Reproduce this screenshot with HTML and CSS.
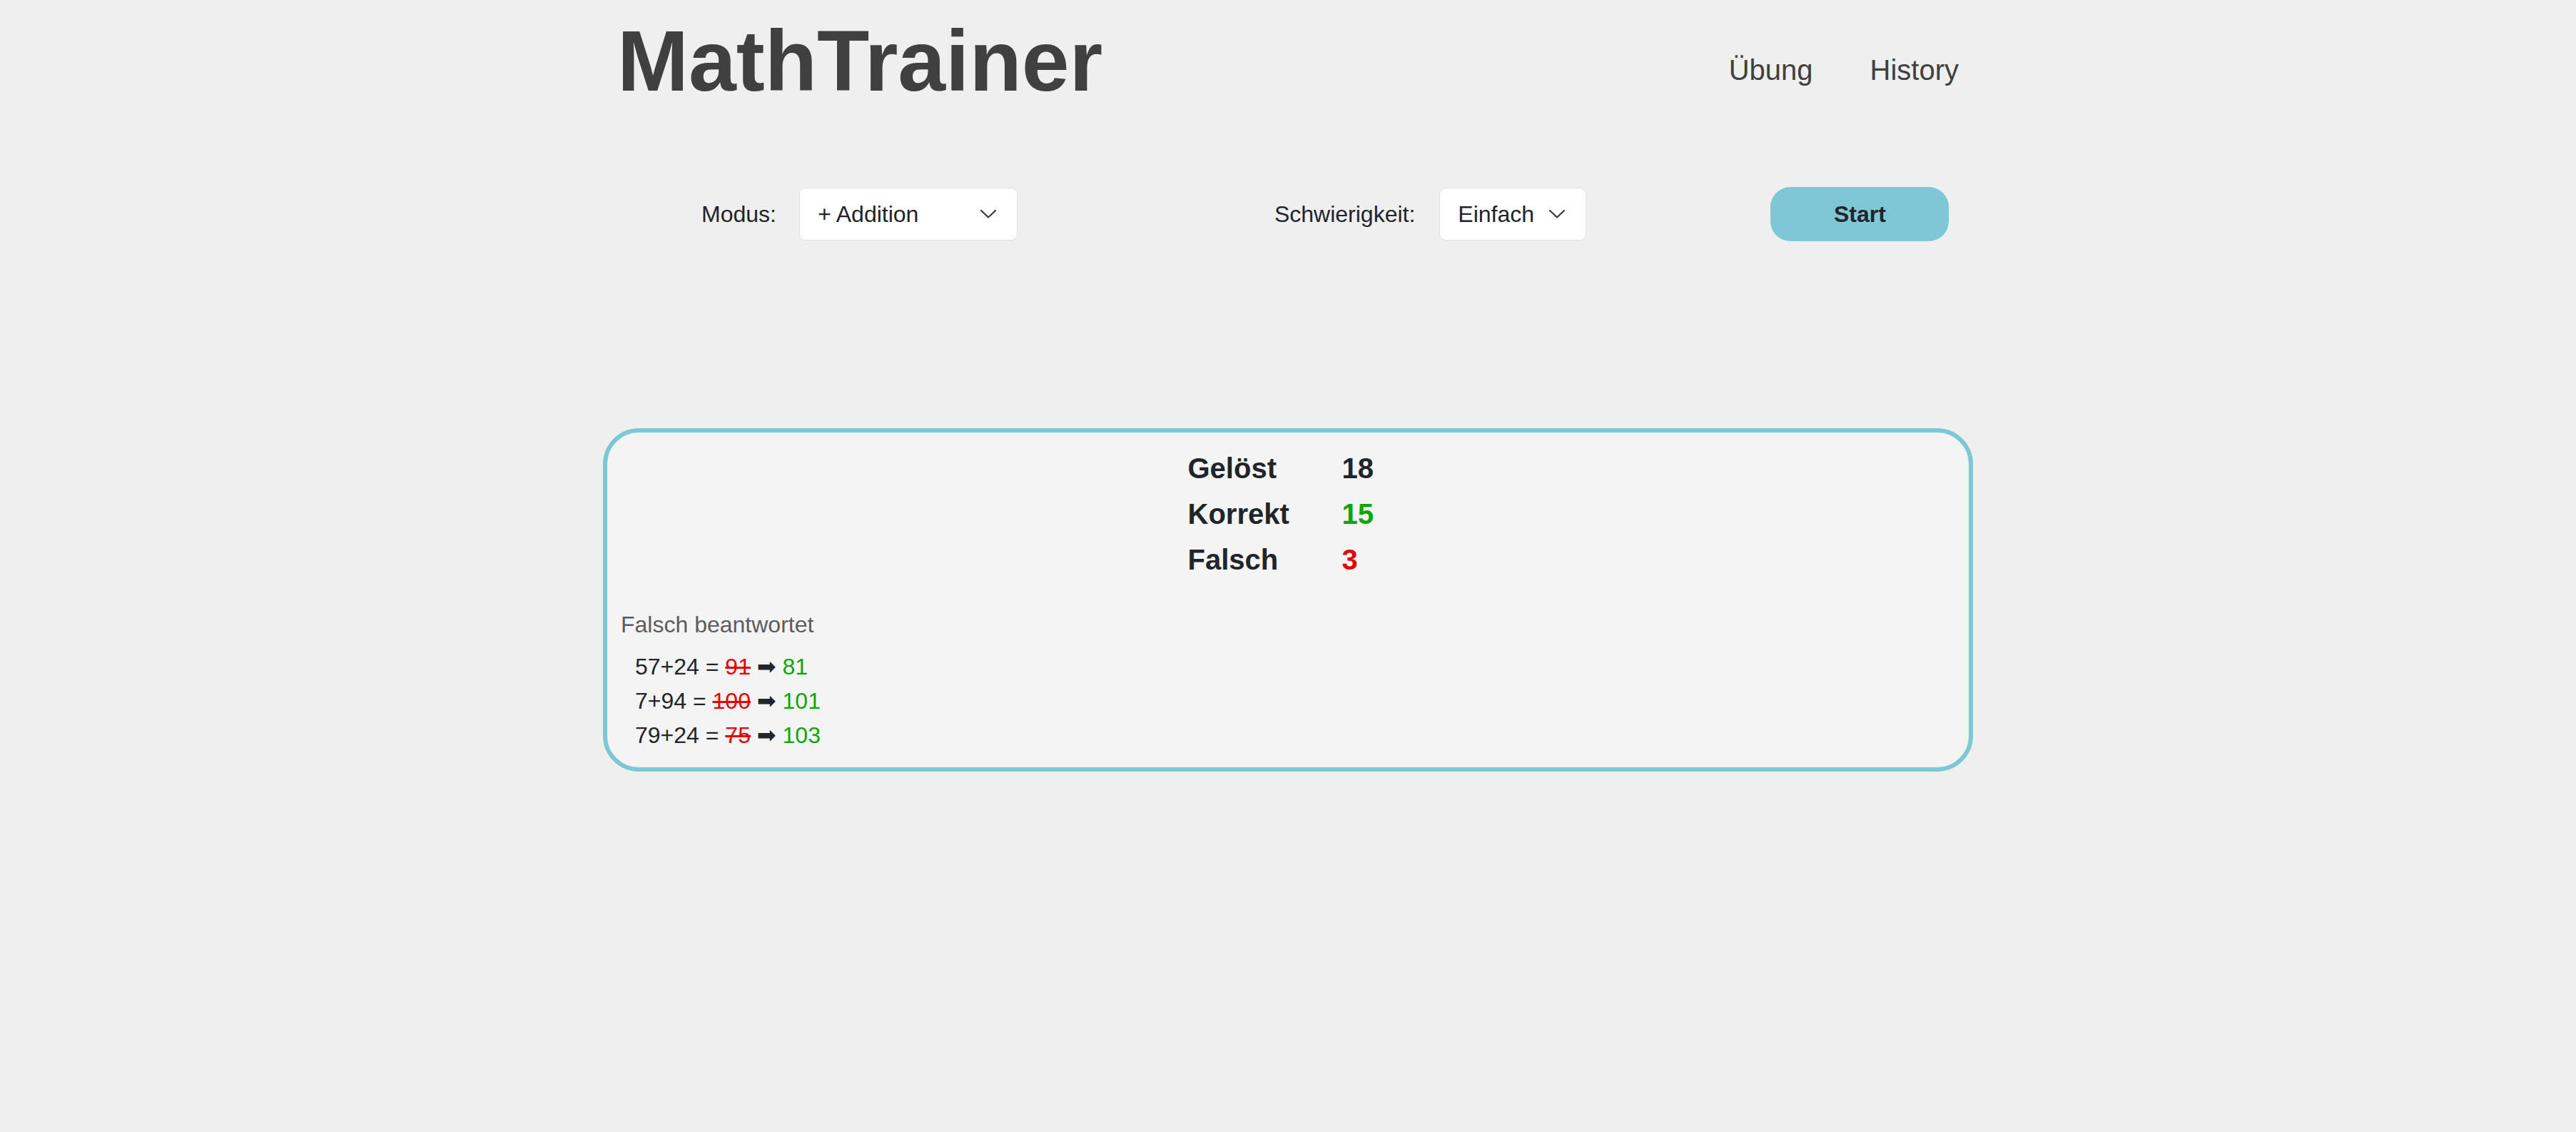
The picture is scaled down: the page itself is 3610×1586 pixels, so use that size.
FILE: index.html
```html
<!DOCTYPE html>
<html lang="de">
<head>
<meta charset="utf-8">
<title>MathTrainer</title>
<link rel="stylesheet" href="styles.css">
</head>
<body>
<div class="container">
  <header class="header">
    <h1 class="brand">MathTrainer</h1>
    <nav class="nav">
      <a class="nav-link" href="#">Übung</a>
      <a class="nav-link" href="#">History</a>
    </nav>
  </header>

  <div class="controls">
    <div class="group group-mode">
      <span class="label">Modus:</span>
      <div class="select select-mode">
        <span class="select-text">+ Addition</span>
        <svg class="chevron" viewBox="0 0 22 12" width="22" height="12"><path d="M1 1 L11 10.5 L21 1" fill="none" stroke="#343a40" stroke-width="2.2" stroke-linecap="round" stroke-linejoin="round"/></svg>
      </div>
    </div>
    <div class="group group-level">
      <span class="label">Schwierigkeit:</span>
      <div class="select select-level">
        <span class="select-text">Einfach</span>
        <svg class="chevron" viewBox="0 0 22 12" width="22" height="12"><path d="M1 1 L11 10.5 L21 1" fill="none" stroke="#343a40" stroke-width="2.2" stroke-linecap="round" stroke-linejoin="round"/></svg>
      </div>
    </div>
    <button class="start-btn" type="button">Start</button>
  </div>

  <section class="result">
    <div class="stats">
      <div class="stat-label">Gelöst</div><div class="stat-value">18</div>
      <div class="stat-label">Korrekt</div><div class="stat-value green">15</div>
      <div class="stat-label">Falsch</div><div class="stat-value red">3</div>
    </div>
    <h2 class="wrong-title">Falsch beantwortet</h2>
    <ul class="wrong-list">
      <li>57+24 = <s class="wrong">91</s> <span class="arrow">➡</span> <span class="right">81</span></li>
      <li>7+94 = <s class="wrong">100</s> <span class="arrow">➡</span> <span class="right">101</span></li>
      <li>79+24 = <s class="wrong">75</s> <span class="arrow">➡</span> <span class="right">103</span></li>
    </ul>
  </section>
</div>
</body>
</html>
```
FILE: styles.css
```css
* { box-sizing: border-box; }

html, body {
  margin: 0;
  padding: 0;
  background: #efefef;
}

body {
  font-family: "Liberation Sans", Arial, Helvetica, sans-serif;
  color: #212529;
}

.container {
  width: 1920px;
  margin: 0 auto;
}

.header {
  display: flex;
  justify-content: space-between;
  align-items: flex-start;
  padding: 16px 20px 0 20px;
}

.brand {
  margin: 0;
  font-size: 120px;
  font-weight: 700;
  line-height: 138px;
  color: #404040;
}

.nav {
  display: flex;
  gap: 80px;
  margin-top: 59px;
}

.nav-link {
  font-size: 40px;
  line-height: 46px;
  color: #404040;
  text-decoration: none;
}

.controls {
  display: flex;
  align-items: center;
  height: 76px;
  margin-top: 108px;
  padding-left: 138px;
}

.group {
  display: flex;
  align-items: center;
  gap: 32px;
}

.group-mode { margin-right: 360px; }
.group-level { margin-right: 258px; gap: 34px; }

.label {
  font-size: 32px;
  color: #212529;
}

.select {
  display: flex;
  align-items: center;
  justify-content: space-between;
  height: 74px;
  background: #ffffff;
  border: 1.5px solid #dfe2e6;
  border-radius: 9px;
  padding: 0 29px 0 25px;
  font-size: 32px;
  color: #212529;
}

.select-mode { width: 306px; }
.select-level { width: 206px; }

.chevron { display: block; flex: none; }

.start-btn {
  width: 250px;
  height: 76px;
  border: none;
  border-radius: 28px;
  background: #7ec8d6;
  font-family: "Liberation Sans", Arial, Helvetica, sans-serif;
  font-size: 32px;
  font-weight: 700;
  color: #212529;
  padding: 0;
}

.result {
  margin-top: 262px;
  border: 6px solid #7ec8d6;
  border-radius: 50px;
  background: #f4f4f4;
  padding: 18px 18px 21px 19px;
}

.stats {
  display: grid;
  grid-template-columns: 216px 66px;
  justify-content: center;
  font-size: 40px;
  font-weight: 700;
  line-height: 64px;
  color: #212529;
}

.green { color: #0aa70a; }
.red { color: #e60000; }

.wrong-title {
  margin: 35px 0 11px 0;
  font-size: 32px;
  font-weight: 400;
  line-height: 48px;
  color: #5c5c5c;
}

.wrong-list {
  list-style: none;
  margin: 0;
  padding: 0 0 0 20px;
  font-size: 32px;
  line-height: 48px;
  color: #212529;
}

.wrong {
  color: #e60000;
  text-decoration: line-through;
}

.arrow {
  font-family: "DejaVu Sans", sans-serif;
  color: #212529;
}

.right { color: #0aa70a; }
```
